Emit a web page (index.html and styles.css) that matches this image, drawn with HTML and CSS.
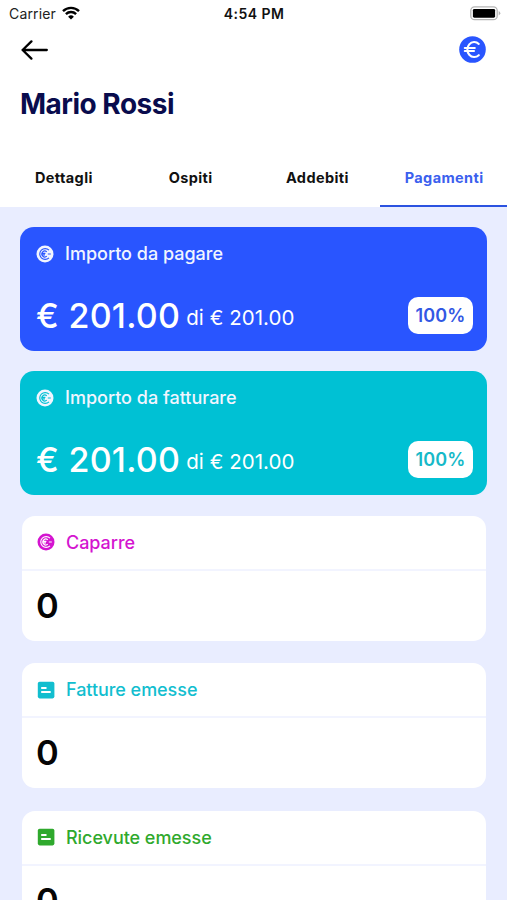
FILE: index.html
```html
<!DOCTYPE html>
<html lang="it">
<head>
<meta charset="utf-8">
<title>Mario Rossi</title>
<link rel="stylesheet" href="styles.css">
</head>
<body>
<svg class="defs" aria-hidden="true">
  <symbol id="coin" viewBox="0 0 18 18">
    <circle class="disc" cx="9" cy="9" r="8.5"/>
    <path class="cut" d="M13 5.2A5.4 5.4 0 1 0 13 12.8M10.8 6.9A2.9 2.9 0 1 0 10.8 11.1M5.4 8.3H9.4M5.4 9.9H9M11.8 9H14.8"/>
  </symbol>
  <symbol id="note" viewBox="0 0 18 18">
    <rect class="disc" x=".8" y=".8" width="16.6" height="16.6" rx="1.8"/>
    <path class="line" d="M4.9 7H8.8M4.9 11H13"/>
  </symbol>
</svg>
<div class="screen">
  <header class="top">
    <div class="status">
      <div class="carrier"><span>Carrier</span>
        <svg class="wifi" viewBox="0 0 18 14"><path d="M1 5.2A11.4 11.4 0 0 1 17 5.2M3.9 8.1A7.3 7.3 0 0 1 14.1 8.1"/><path class="dot" d="M9 13.6L6.1 10.7A4.2 4.2 0 0 1 11.9 10.7Z"/></svg>
      </div>
      <div class="time">4:54 PM</div>
      <svg class="battery" viewBox="0 0 31 15"><rect class="shell" x=".8" y=".8" width="26.4" height="12.9" rx="3.8"/><rect x="2.9" y="2.9" width="22.2" height="8.8" rx="1.4"/><path class="cap" d="M28.7 5Q32 7.2 28.7 9.4Z"/></svg>
    </div>
    <div class="nav">
      <svg class="back" viewBox="0 0 28 20"><path d="M25.8 10H1.6M10.4 1.4L1.6 10L10.4 18.6"/></svg>
      <svg class="euro" viewBox="0 0 27 27"><circle cx="13.5" cy="13.5" r="13.3"/><path d="M19.8 7.9A6.9 7.5 0 1 0 19.8 19.2M5.8 12H15.8M5.8 15H15"/></svg>
    </div>
    <h1>Mario Rossi</h1>
    <nav class="tabs">
      <a class="tab">Dettagli</a>
      <a class="tab">Ospiti</a>
      <a class="tab">Addebiti</a>
      <a class="tab active">Pagamenti</a>
    </nav>
  </header>
  <main>
    <section class="summary blue">
      <div class="label"><svg><use href="#coin"/></svg><span>Importo da pagare</span></div>
      <div class="amount"><strong>€ 201.00</strong><span class="of">di € 201.00</span><span class="badge"><b>100%</b></span></div>
    </section>
    <section class="summary teal">
      <div class="label"><svg><use href="#coin"/></svg><span>Importo da fatturare</span></div>
      <div class="amount"><strong>€ 201.00</strong><span class="of">di € 201.00</span><span class="badge"><b>100%</b></span></div>
    </section>
    <section class="card magenta">
      <div class="head"><svg><use href="#coin"/></svg><span>Caparre</span></div>
      <div class="count">0</div>
    </section>
    <section class="card cyan">
      <div class="head"><svg><use href="#note"/></svg><span>Fatture emesse</span></div>
      <div class="count">0</div>
    </section>
    <section class="card green">
      <div class="head"><svg><use href="#note"/></svg><span>Ricevute emesse</span></div>
      <div class="count">0</div>
    </section>
  </main>
</div>
</body>
</html>
```
FILE: styles.css
```css
* { box-sizing: border-box; }
body { margin: 0; font-family: Inter, "Liberation Sans", sans-serif; background: #e9edff; }
.defs { display: none; }
.screen { height: 900px; overflow: hidden; background: #e9edff; }
.top { height: 207px; background: #fff; }
.status { display: grid; grid-template-columns: 1fr auto 1fr; align-items: center; height: 28px; padding: 0 6px 0 9px; }
.carrier { display: flex; align-items: center; gap: 6px; font-size: 14px; letter-spacing: .15px; color: #222; margin-top: -1px; }
.wifi { width: 18px; height: 14px; margin-top: -2px; fill: none; stroke: #000; stroke-width: 2.4; }
.wifi .dot { fill: #000; stroke: none; }
.time { font-size: 14px; font-weight: 600; color: #111; letter-spacing: .45px; margin: -2px 2px 0 0; }
.battery { width: 31px; height: 15px; justify-self: end; margin-top: -2px; }
.battery .shell { fill: #fff; stroke: #b5b5b5; stroke-width: 1.3; }
.battery .cap { fill: #b5b5b5; }
.nav { display: flex; justify-content: space-between; align-items: center; height: 43px; padding: 0 21px; }
.back { width: 28px; height: 20px; fill: none; stroke: #000; stroke-width: 2.3; stroke-linecap: round; stroke-linejoin: round; }
.euro { width: 27px; height: 27px; fill: #2955ff; }
.euro path { fill: none; stroke: #fff; stroke-width: 2.1; stroke-linecap: round; }
h1 { margin: 15px 0 0 20px; font-size: 28px; line-height: 36px; font-weight: 650; letter-spacing: -.5px; color: #090c4d; }
.tabs { display: grid; grid-template-columns: repeat(4, 1fr); height: 60px; margin-top: 25px; }
.tab { display: flex; justify-content: center; align-items: center; font-size: 14.5px; font-weight: 650; letter-spacing: .38px; color: #111; padding: 3px 0 0 1px; border-bottom: 2px solid transparent; }
.active { color: #3b60ee; border-bottom: 2px solid #2b52e0; }
main { padding: 20px 20px 0; }
.summary { height: 124px; border-radius: 14px; color: #fff; padding: 15px 14px 0 16px; margin-bottom: 20px; }
.blue { background: #2955ff; --bg: #2955ff; --tint: #3358e4; }
.teal { background: #00c1d4; --bg: #00c1d4; --tint: #16b9c8; }
.label, .head { display: flex; align-items: center; font-size: 18px; font-weight: 450; gap: 11px; }
.label { height: 23px; color: #f1f5ff; }
.label svg, .head svg { width: 18px; height: 18px; flex: none; }
.disc { fill: currentColor; }
.cut { fill: none; stroke: var(--bg); stroke-width: 1.15; }
.line { fill: none; stroke: #fff; stroke-width: 1.9; stroke-linecap: round; }
.amount { display: flex; align-items: flex-start; margin-top: 28px; height: 46px; }
.amount strong { font-size: 34px; line-height: 46px; font-weight: 500; letter-spacing: .25px; white-space: nowrap; }
.of { font-size: 20.5px; line-height: 24px; margin: 13px 0 0 6px; letter-spacing: .05px; white-space: nowrap; }
.badge { display: flex; align-items: center; justify-content: center; width: 65px; height: 37px; margin: 4px 0 0 auto; border-radius: 10px; background: #fff; color: var(--tint); font-size: 18px; }
.badge b { font-weight: 600; letter-spacing: .1px; }
.card { height: 125px; margin: 0 1px 22.5px 2px; border-radius: 13px; background: #fff; --bg: #fff; }
.summary + .card { margin-top: 20.5px; }
.head { height: 55px; padding-left: 15px; letter-spacing: -.05px; border-bottom: 2px solid #f2f4ff; }
.count { padding: 13px 0 0 14px; font-size: 34.5px; line-height: 43px; font-weight: 580; color: #050505; }
.magenta .head { color: #d414d0; }
.cyan .head { color: #12becf; }
.green .head { color: #2fa92d; }
```
